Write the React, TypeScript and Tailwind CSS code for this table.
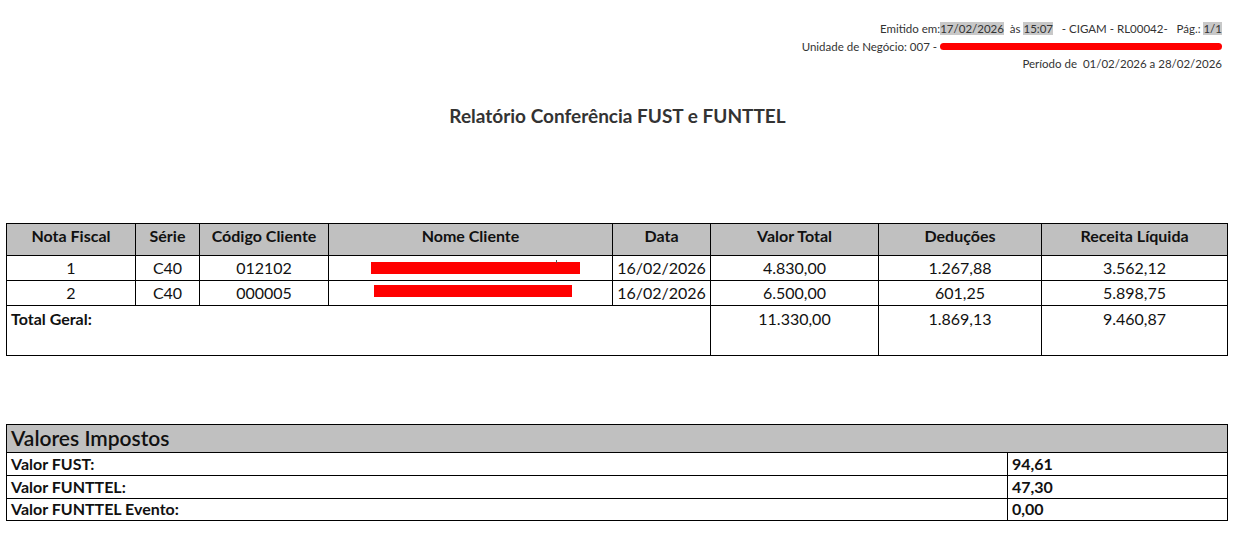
import React from "react";

const font = { fontFamily: "Lato, 'Open Sans', sans-serif" };

export default function App() {
  return (
    <div className="w-[1243px] h-[549px] bg-white text-[#111] overflow-hidden" style={font}>
      <div className="flex flex-col items-end pr-[21px] pt-[20px] text-[11.5px] leading-[17.5px] text-[#333]">
        <div className="whitespace-pre">
          Emitido em:<span className="bg-[#c8c8c8]">17/02/2026</span>  às <span className="bg-[#c8c8c8]">15:07</span>   - CIGAM - RL00042-   Pág.: <span className="bg-[#c8c8c8]">1/1</span>
        </div>
        <div className="flex items-center whitespace-pre">
          <span>Unidade de Negócio: 007 - </span>
          <span className="relative inline-block w-[282px] h-[10px]">
            <span className="absolute left-0 right-0 top-[2px] h-[7px] rounded-full bg-[#ff0000]" />
          </span>
        </div>
        <div className="whitespace-pre">Período de  01/02/2026 a 28/02/2026</div>
      </div>

      <div className="text-center mt-[31px] pr-[8px] text-[19px] font-bold text-[#333] leading-[24px]">
        Relatório Conferência FUST e FUNTTEL
      </div>

      <div className="pl-[6px] pt-[95px]">
        <table className="table-fixed border-collapse w-[1221px] text-[16px]">
          <colgroup>
            <col className="w-[129px]" />
            <col className="w-[64px]" />
            <col className="w-[129px]" />
            <col className="w-[284px]" />
            <col className="w-[98px]" />
            <col className="w-[168px]" />
            <col className="w-[163px]" />
            <col className="w-[186px]" />
          </colgroup>
          <thead>
            <tr className="h-[32px] bg-[#c0c0c0]">
              {["Nota Fiscal", "Série", "Código Cliente", "Nome Cliente", "Data", "Valor Total", "Deduções", "Receita Líquida"].map((h) => (
                <th key={h} className="border border-black font-bold text-center p-0 pb-[6px] align-middle">{h}</th>
              ))}
            </tr>
          </thead>
          <tbody>
            <tr className="h-[25px]">
              <td className="border border-black text-center p-0">1</td>
              <td className="border border-black text-center p-0">C40</td>
              <td className="border border-black text-center p-0">012102</td>
              <td className="border border-black p-0">
                <div className="relative h-[24px]">
                  <div className="absolute left-[42px] top-[6px] w-[209px] h-[12px] bg-[#ff0000]" />
                  <div className="absolute left-[227px] top-[4px] w-[1px] h-[3px] bg-[#555]" />
                </div>
              </td>
              <td className="border border-black text-center p-0">16/02/2026</td>
              <td className="border border-black text-center p-0">4.830,00</td>
              <td className="border border-black text-center p-0">1.267,88</td>
              <td className="border border-black text-center p-0">3.562,12</td>
            </tr>
            <tr className="h-[25px]">
              <td className="border border-black text-center p-0">2</td>
              <td className="border border-black text-center p-0">C40</td>
              <td className="border border-black text-center p-0">000005</td>
              <td className="border border-black p-0">
                <div className="relative h-[24px]">
                  <div className="absolute left-[45px] top-[4px] w-[198px] h-[12px] bg-[#ff0000]" />
                </div>
              </td>
              <td className="border border-black text-center p-0">16/02/2026</td>
              <td className="border border-black text-center p-0">6.500,00</td>
              <td className="border border-black text-center p-0">601,25</td>
              <td className="border border-black text-center p-0">5.898,75</td>
            </tr>
            <tr className="h-[50px]">
              <td colSpan={5} className="border border-black align-top font-bold pl-[4px] pt-[2px] leading-[22px]">Total Geral:</td>
              <td className="border border-black align-top text-center pt-[2px] leading-[22px]">11.330,00</td>
              <td className="border border-black align-top text-center pt-[2px] leading-[22px]">1.869,13</td>
              <td className="border border-black align-top text-center pt-[2px] leading-[22px]">9.460,87</td>
            </tr>
          </tbody>
        </table>
      </div>

      <div className="pl-[6px] pt-[68px]">
        <table className="table-fixed border-collapse w-[1221px] text-[16px]">
          <colgroup>
            <col className="w-[1001px]" />
            <col className="w-[220px]" />
          </colgroup>
          <thead>
            <tr className="h-[28px] bg-[#c0c0c0]">
              <th colSpan={2} className="border border-black text-left font-semibold text-[21px] pl-[4px] p-0 leading-[26px]">Valores Impostos</th>
            </tr>
          </thead>
          <tbody>
            {[
              ["Valor FUST:", "94,61", "h-[23px]"],
              ["Valor FUNTTEL:", "47,30", "h-[23px]"],
              ["Valor FUNTTEL Evento:", "0,00", "h-[22px]"],
            ].map(([l, v, h]) => (
              <tr key={l} className={h}>
                <td className="border border-black font-bold pl-[4px] p-0 leading-[20px]">{l}</td>
                <td className="border border-black font-bold pl-[4px] p-0 leading-[20px]">{v}</td>
              </tr>
            ))}
          </tbody>
        </table>
      </div>
    </div>
  );
}
